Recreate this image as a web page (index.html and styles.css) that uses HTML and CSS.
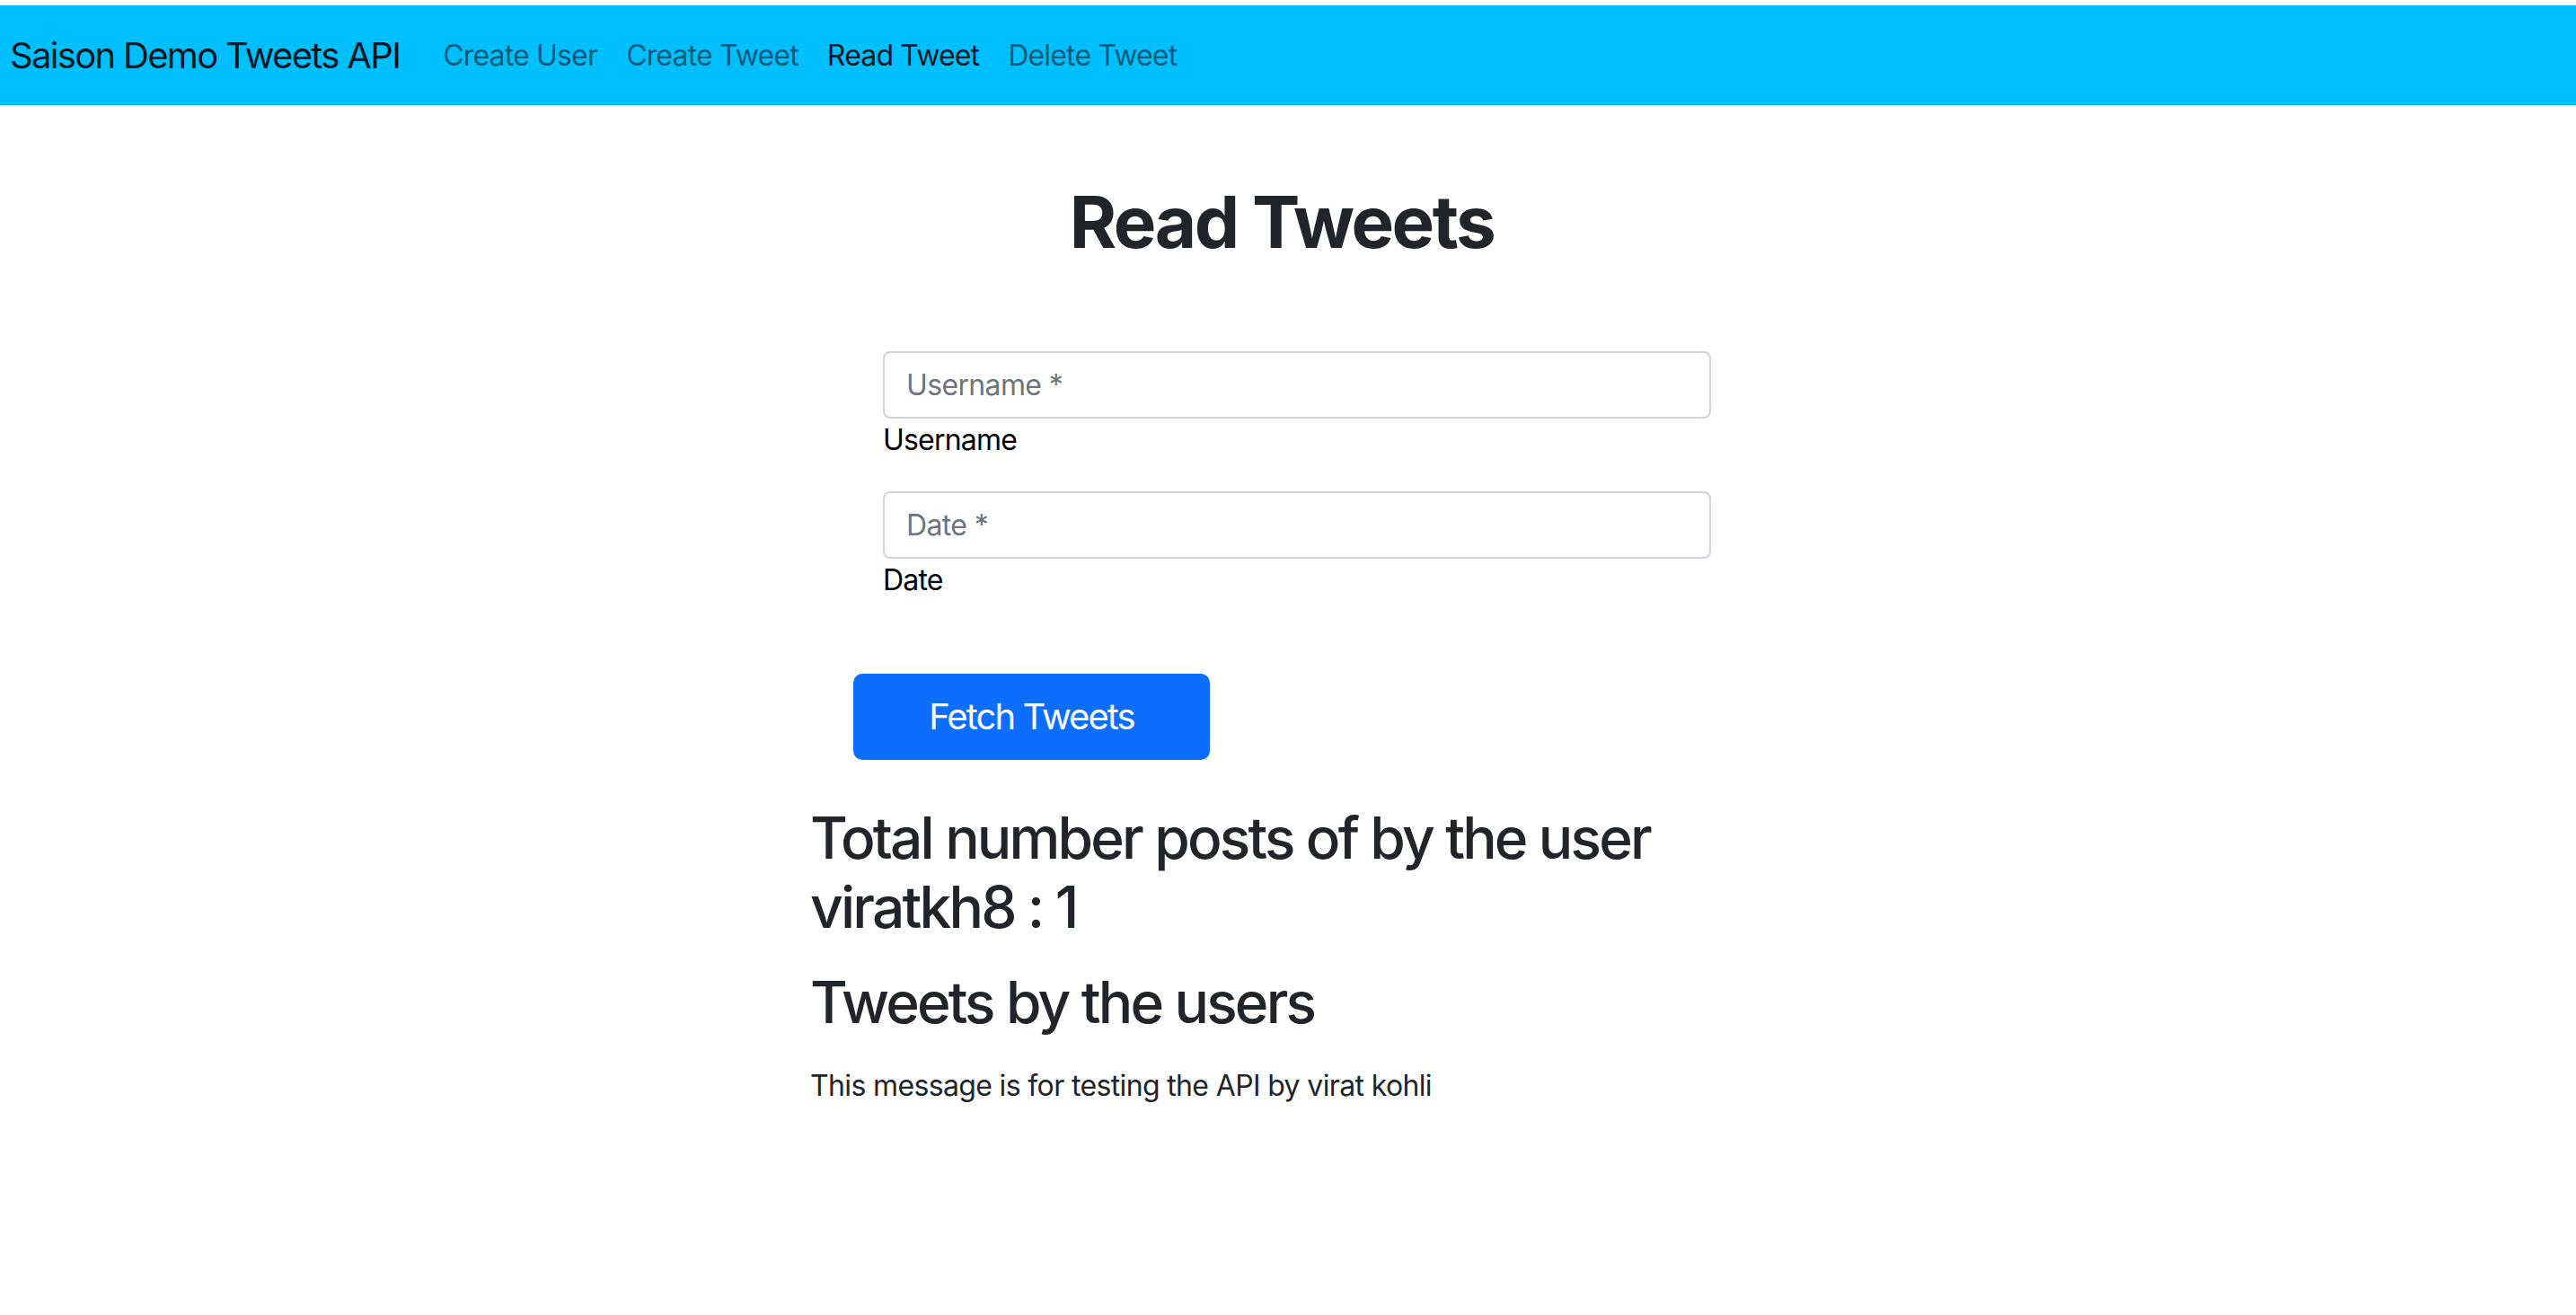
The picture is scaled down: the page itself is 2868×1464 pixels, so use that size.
FILE: index.html
```html
<!DOCTYPE html>
<html lang="en">
<head>
<meta charset="utf-8">
<title>Saison Demo Tweets API</title>
<link rel="stylesheet" href="styles.css">
</head>
<body>
<nav class="navbar">
  <a class="brand" href="#">Saison Demo Tweets API</a>
  <ul class="nav-list">
    <li><a class="nav-link" href="#">Create User</a></li>
    <li><a class="nav-link" href="#">Create Tweet</a></li>
    <li><a class="nav-link active" href="#">Read Tweet</a></li>
    <li><a class="nav-link" href="#">Delete Tweet</a></li>
  </ul>
</nav>
<main class="page">
  <h1 class="title">Read Tweets</h1>
  <div class="content">
    <form class="form">
      <div class="fields">
        <div class="field">
          <input class="input" type="text" placeholder="Username *">
          <label class="label">Username</label>
        </div>
        <div class="field">
          <input class="input" type="text" placeholder="Date *">
          <label class="label">Date</label>
        </div>
      </div>
      <button class="btn" type="button">Fetch Tweets</button>
    </form>
    <h2 class="heading">Total number posts of by the user viratkh8 : 1</h2>
    <h2 class="heading">Tweets by the users</h2>
    <p class="tweet">This message is for testing the API by virat kohli</p>
  </div>
</main>
</body>
</html>
```
FILE: styles.css
```css
* { box-sizing: border-box; }

html, body {
  margin: 0;
  padding: 0;
  background: #ffffff;
}

body {
  font-family: Inter, "Noto Sans", "Liberation Sans", sans-serif;
  font-size: 32px;
  line-height: 48px;
  letter-spacing: -0.02em;
  color: #212529;
}

.navbar {
  margin-top: 6px;
  height: 111px;
  background: #00bfff;
  display: flex;
  align-items: center;
  padding: 0 11px;
}

.brand {
  font-size: 40px;
  line-height: 60px;
  letter-spacing: -0.042em;
  color: rgba(0, 0, 0, 0.9);
  text-decoration: none;
  margin-right: 32px;
  white-space: nowrap;
}

.nav-list {
  list-style: none;
  margin: 0;
  padding: 0;
  display: flex;
}

.nav-link {
  display: block;
  padding: 16px 16px;
  font-size: 32px;
  line-height: 48px;
  letter-spacing: -0.026em;
  color: rgba(0, 0, 0, 0.55);
  text-decoration: none;
  white-space: nowrap;
}

.nav-link.active {
  color: rgba(0, 0, 0, 0.9);
}

.page {
  display: flex;
  flex-direction: column;
}

.title {
  margin: 82px 0 0;
  padding-right: 14px;
  text-align: center;
  font-size: 80px;
  line-height: 96px;
  font-weight: 700;
  letter-spacing: -0.031em;
  color: #212529;
}

.content {
  width: 1064px;
  margin: 96px auto 0;
}

.form {
  margin: 0 0 0 48px;
}

.fields {
  margin-left: 33px;
  width: 922px;
}

.field {
  display: flex;
  flex-direction: column;
  margin-bottom: 33px;
}

.field:last-child {
  margin-bottom: 0;
}

.input {
  display: block;
  width: 100%;
  height: 75px;
  padding: 12px 24px;
  font-family: inherit;
  font-size: 32px;
  line-height: 48px;
  letter-spacing: -0.02em;
  color: #212529;
  background: #ffffff;
  border: 2px solid #ced4da;
  border-radius: 8px;
  outline: none;
}

.input::placeholder {
  color: #6c757d;
  opacity: 1;
}

.label {
  font-size: 32px;
  line-height: 48px;
  letter-spacing: -0.025em;
  color: #000000;
}

.btn {
  display: block;
  margin-top: 80px;
  width: 397px;
  height: 96px;
  padding: 16px 0;
  font-family: inherit;
  font-size: 40px;
  line-height: 60px;
  letter-spacing: -0.048em;
  color: #ffffff;
  background: #0d6efd;
  border: 2px solid #0d6efd;
  border-radius: 10px;
  text-align: center;
}

.heading {
  margin: 0;
  font-size: 64px;
  line-height: 76.8px;
  font-weight: 500;
  letter-spacing: -0.044em;
  color: #212529;
}

.heading:first-of-type {
  margin-top: 49px;
  margin-bottom: 29px;
}

.heading + .heading {
  margin-bottom: 31px;
}

.tweet {
  margin: 0;
  font-size: 32px;
  line-height: 48px;
  color: #212529;
}
```
